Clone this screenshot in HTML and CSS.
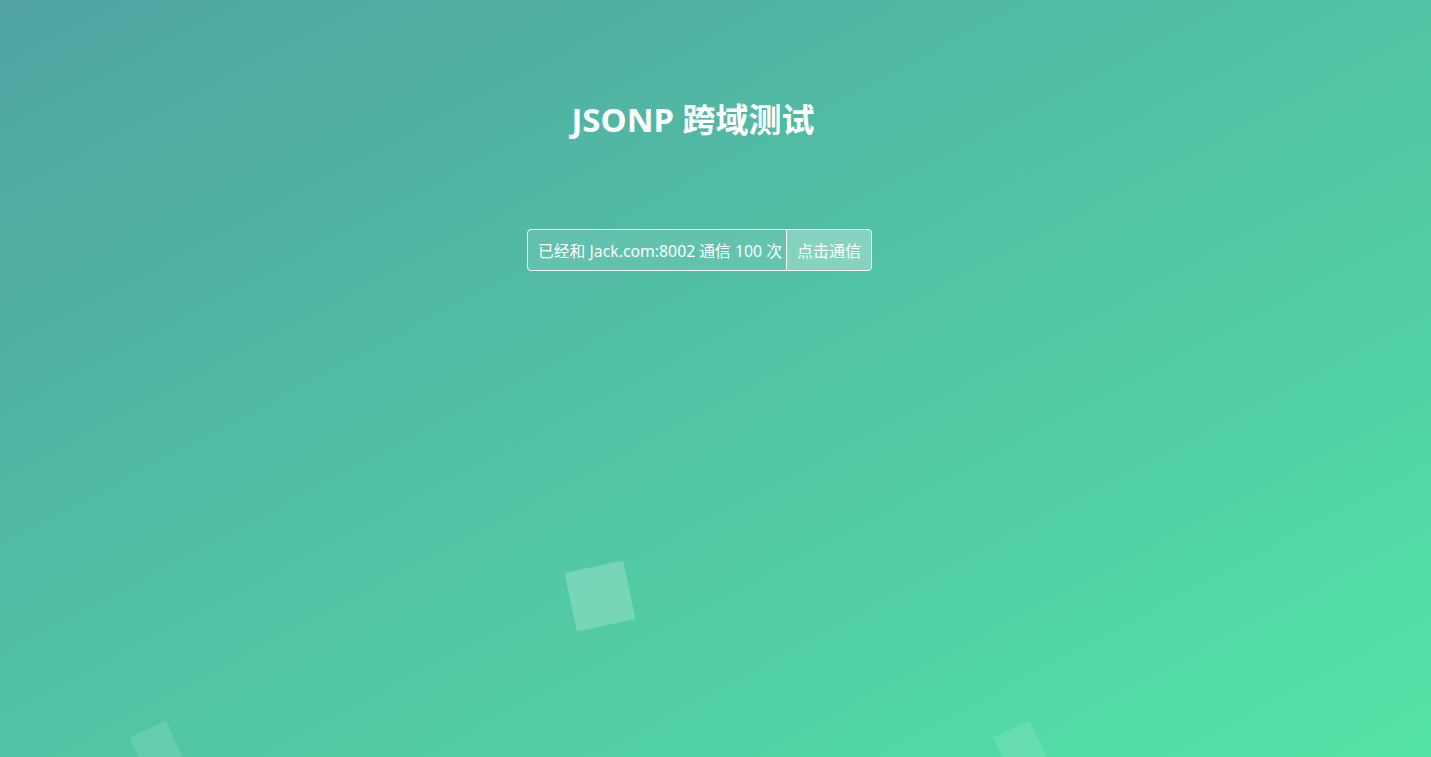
FILE: index.html
```html
<!DOCTYPE html>
<html lang="zh-CN">
<head>
<meta charset="utf-8">
<title>JSONP 跨域测试</title>
<link rel="stylesheet" href="styles.css">
</head>
<body>
<div class="wrapper">
  <div class="container">
    <h1 class="title">JSONP 跨域测试</h1>
    <form class="form" onsubmit="return false">
      <input class="status" type="text" value="已经和 Jack.com:8002 通信 100 次" readonly>
      <button class="send" type="button">点击通信</button>
    </form>
  </div>
  <ul class="bubbles">
    <li class="bubble b1"></li>
    <li class="bubble b2"></li>
    <li class="bubble b3"></li>
  </ul>
</div>
</body>
</html>
```
FILE: styles.css
```css
* { box-sizing: border-box; }
html, body { margin: 0; padding: 0; height: 100%; }
body {
  font-family: "Noto Sans", "Noto Sans CJK SC", sans-serif;
  color: #fff;
  overflow: hidden;
}
.wrapper {
  position: relative;
  width: 100%;
  height: 100%;
  overflow: hidden;
  background: linear-gradient(to bottom right, #50a3a2 0%, #53e3a6 100%);
}
.container {
  display: flex;
  flex-direction: column;
  align-items: center;
  padding: 96px 45px 0 0;
  position: relative;
  z-index: 2;
}
.title {
  margin: 0;
  font-size: 33px;
  font-weight: 700;
  line-height: 48px;
  letter-spacing: 0;
}
.form {
  display: flex;
  margin: 85px 0 0 13px;
  height: 42px;
  border: 1px solid #fff;
  border-radius: 4px;
  overflow: hidden;
}
.status {
  width: 259px;
  height: 40px;
  border: 0;
  border-right: 1px solid #fff;
  padding: 0 0 0 10px;
  font: inherit;
  font-size: 15.8px;
  color: #fff;
  background: rgba(255, 255, 255, 0.1);
  outline: none;
}
.send {
  width: 84px;
  height: 40px;
  border: 0;
  padding: 0;
  font: inherit;
  font-size: 16px;
  color: #fff;
  background: rgba(255, 255, 255, 0.3);
  cursor: pointer;
}
.bubbles {
  list-style: none;
  margin: 0;
  padding: 0;
  position: absolute;
  inset: 0;
  z-index: 1;
}
.bubble {
  position: absolute;
  background: rgba(255, 255, 255, 0.15);
}
.b1 {
  left: 570px; top: 566px;
  width: 60px; height: 60px;
  transform: rotate(-12deg);
  background: rgba(255, 255, 255, 0.22);
}
.b2 {
  left: 136px; top: 727px;
  width: 40px; height: 40px;
  transform: rotate(-25deg);
  background: rgba(255, 255, 255, 0.12);
}
.b3 {
  left: 1000px; top: 727px;
  width: 40px; height: 40px;
  transform: rotate(-25deg);
  background: rgba(255, 255, 255, 0.12);
}
```
